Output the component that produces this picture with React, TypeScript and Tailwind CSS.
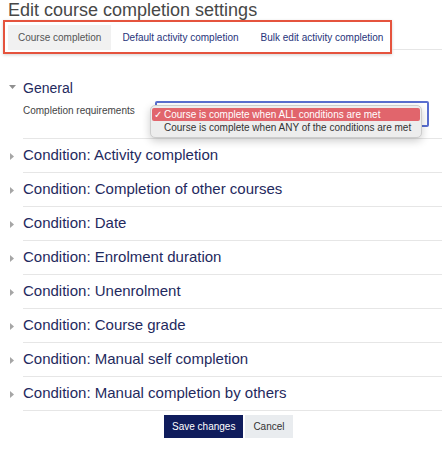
import React from "react";

const conditions: string[] = [
  "Activity completion",
  "Completion of other courses",
  "Date",
  "Enrolment duration",
  "Unenrolment",
  "Course grade",
  "Manual self completion",
  "Manual completion by others",
];

function CaretRight() {
  return (
    <svg width="4" height="7" viewBox="0 0 4 7" className="block">
      <polygon points="0,0 4,3.5 0,7" fill="#a6a6a6" />
    </svg>
  );
}

function CaretDown() {
  return (
    <svg width="7" height="4" viewBox="0 0 7 4" className="block">
      <polygon points="0,0 7,0 3.5,4" fill="#8f8f8f" />
    </svg>
  );
}

export default function App() {
  return (
    <main className="min-h-screen w-[442px] overflow-hidden bg-white font-['Liberation_Sans',Arial,sans-serif]">
      {/* Page title */}
      <h1 className="pl-[8px] text-[18px] font-normal leading-[20px] text-[#474747]">
        Edit course completion settings
      </h1>

      {/* Tabs (highlighted) */}
      <div className="flex items-start">
        <nav className="ml-[3px] flex h-[34px] w-[389px] shrink-0 whitespace-nowrap border-2 border-[#e5533d] pl-[3px] pt-[3px] shadow-[0_1px_3px_rgba(0,0,0,0.18)]">
          <span className="flex h-[25px] shrink-0 items-center bg-[#f1f1f1] px-[10px] text-[10px] text-[#555]">
            Course completion
          </span>
          <span className="flex h-[25px] shrink-0 items-center px-[11px] text-[10px] text-[#27347a]">
            Default activity completion
          </span>
          <span className="flex h-[25px] shrink-0 items-center px-[11px] text-[10px] text-[#27347a]">
            Bulk edit activity completion
          </span>
        </nav>
        <div className="mt-[29px] flex-1 border-b border-[#e6e6e6]" />
      </div>

      {/* General */}
      <section className="mt-[24px]">
        <div className="flex h-[20px] items-center pl-[9px]">
          <span className="mb-[3px] w-[14px]">
            <CaretDown />
          </span>
          <h2 className="text-[14px] leading-[20px] text-[#1f2a5e]">General</h2>
        </div>
        <div className="ml-[23px] mt-[3px] border-b border-[#e6e6e6] pb-[11px]">
          <div className="flex h-[26px] items-start">
            <label className="mt-[3px] w-[132px] text-[10px] leading-[14px] text-[#444]">
              Completion requirements
            </label>
            <div className="relative h-[26px] w-[274px] rounded-[2px] border-2 border-[#5a6fd0] bg-white">
              <div className="absolute left-[-7px] top-[2px] z-10 w-[272px] rounded-[5px] border border-[#cdcdcd] bg-[#ededed] px-px pb-[3px] pt-[2px] shadow-[0_3px_8px_rgba(0,0,0,0.2)]">
                <div className="flex h-[13px] items-center rounded-[2px] bg-[#e1656c] text-[10px] leading-[13px] text-white">
                  <span className="w-[12px] pl-[2px] text-[10px]">✓</span>
                  <span>Course is complete when ALL conditions are met</span>
                </div>
                <div className="flex h-[13px] items-center text-[10px] leading-[13px] text-[#333]">
                  <span className="w-[12px]" />
                  <span>Course is complete when ANY of the conditions are met</span>
                </div>
              </div>
            </div>
          </div>
        </div>
      </section>

      {/* Conditions */}
      <section>
        {conditions.map((c) => (
          <div key={c} className="flex items-center">
            <span className="w-[23px] pl-[10px]">
              <CaretRight />
            </span>
            <div className="flex h-[34px] flex-1 items-center border-b border-[#e6e6e6] text-[15px] text-[#1f2a5e]">
              Condition: {c}
            </div>
          </div>
        ))}
      </section>

      {/* Actions */}
      <div className="ml-[164px] mt-[4px] flex gap-[2px]">
        <button className="h-[23px] bg-[#0f1c5c] px-[8px] text-[10px] text-white">
          Save changes
        </button>
        <button className="h-[23px] bg-[#e9ecef] px-[8px] text-[10px] text-[#333]">
          Cancel
        </button>
      </div>
    </main>
  );
}
